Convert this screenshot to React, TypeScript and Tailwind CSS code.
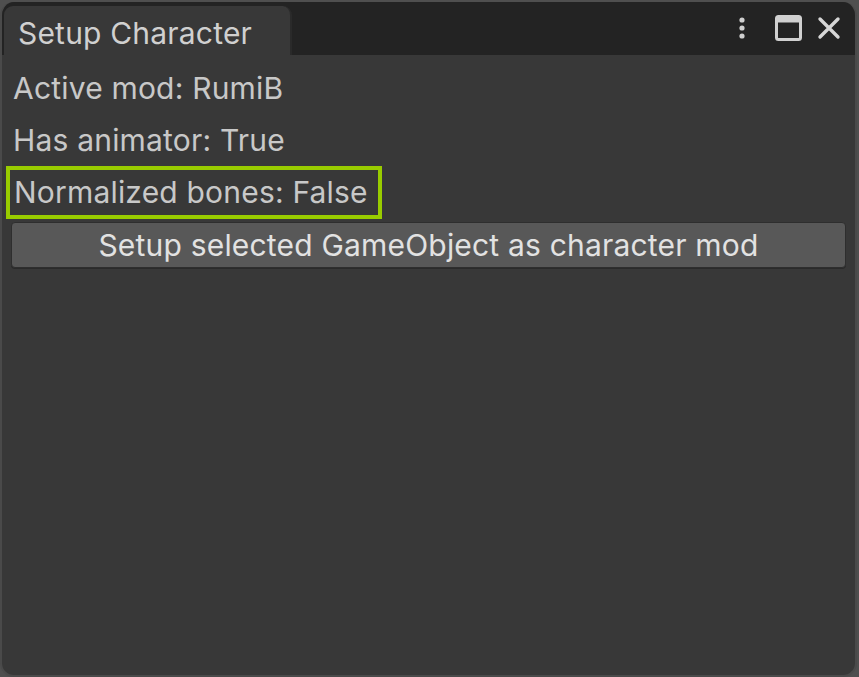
import React from "react";

export default function App() {
  return (
    <div className="w-[859px] h-[677px] bg-[#4f4f4f] pt-[2px] overflow-hidden tracking-[0.012em]" style={{ fontFamily: "Inter, 'Noto Sans', sans-serif" }}>
      <div className="w-[857px] h-[675px] rounded-[14px] bg-[#383838] overflow-hidden flex flex-col border-l-[2px] border-r-[2px] border-b-[2px] border-[#4a4a4a]">
        <div className="h-[53px] bg-[#232323] flex items-end pl-[2px] shrink-0">
          <div className="h-[49px] w-[288px] bg-[#383838] rounded-t-[9px] flex items-center pl-[14px] pt-[5px] text-[30px] text-[#d0d0d0] border-r-[2px] border-[#2a2a2a]">
            Setup Character
          </div>
          <div className="flex-1 h-full flex items-center justify-end pr-[14px] gap-[0px]">
            <svg width="10" height="24" viewBox="0 0 10 24" className="mr-[28px] mb-[2px]">
              <circle cx="5" cy="4" r="2.6" fill="#cfcfcf" />
              <circle cx="5" cy="12" r="2.6" fill="#cfcfcf" />
              <circle cx="5" cy="20" r="2.6" fill="#cfcfcf" />
            </svg>
            <svg width="27" height="26" viewBox="0 0 27 26" className="mr-[15px] mb-[2px]">
              <rect x="1.5" y="1.5" width="24" height="23" rx="2" fill="none" stroke="#d0d0d0" strokeWidth="3" />
              <rect x="1.5" y="1.5" width="24" height="6" fill="#d0d0d0" />
            </svg>
            <svg width="24" height="24" viewBox="0 0 24 24" className="mb-[2px]">
              <path d="M3 3 L21 21 M21 3 L3 21" stroke="#d6d6d6" strokeWidth="3.4" strokeLinecap="round" />
            </svg>
          </div>
        </div>
        <div className="flex flex-col pt-[7px] text-[30px] text-[#c8c8c8]">
          <div className="h-[52px] flex items-center pl-[11px]">Active mod: RumiB</div>
          <div className="h-[52px] flex items-center pl-[11px]">Has animator: True</div>
          <div className="h-[53px] flex items-center pl-[4px]">
            <div className="h-[53px] w-[376px] border-[4px] border-[#99cc00] flex items-center pl-[4px]">
              Normalized bones: False
            </div>
          </div>
          <div className="pl-[9px] pr-[9px] pt-[3px]">
            <button className="w-full h-[46px] bg-[#585858] rounded-[4px] border border-[#2e2e2e] shadow-[0_1px_0_#2a2a2a] text-[#e2e2e2] text-[30px] flex items-center justify-center">
              Setup selected GameObject as character mod
            </button>
          </div>
        </div>
      </div>
    </div>
  );
}
